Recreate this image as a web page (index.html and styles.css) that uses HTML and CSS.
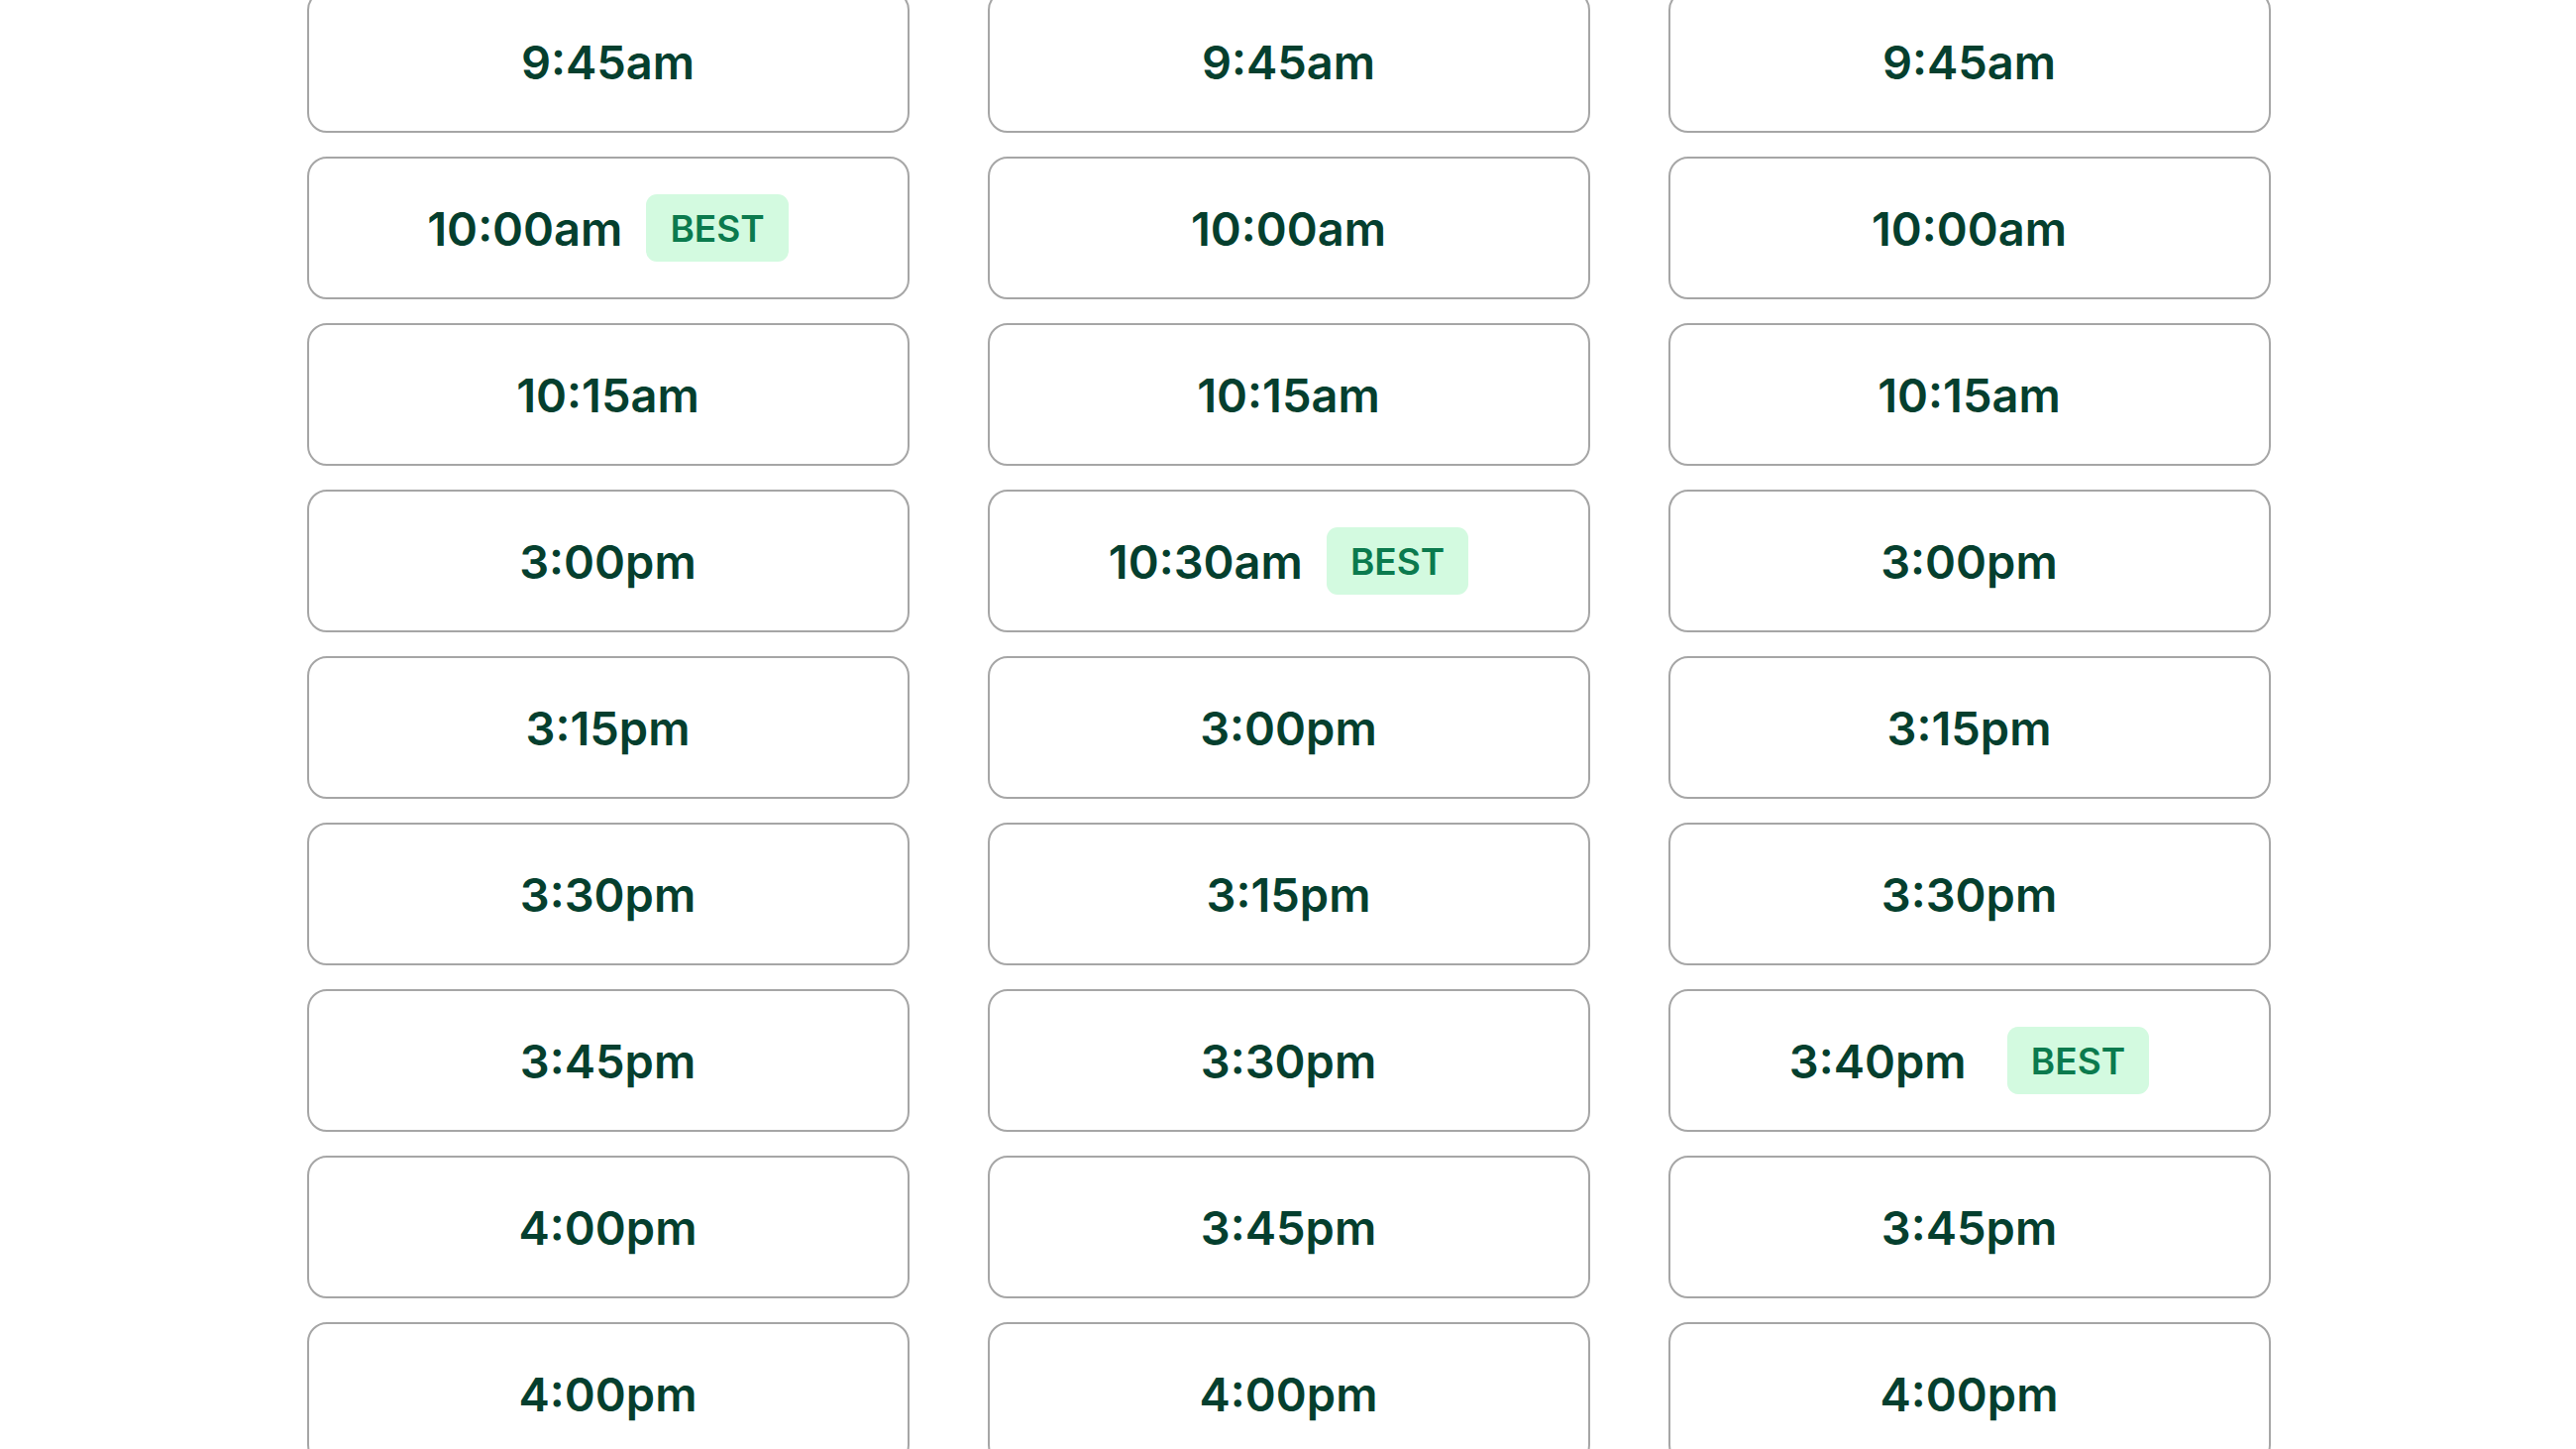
FILE: index.html
```html
<!DOCTYPE html>
<html lang="en">
<head>
<meta charset="utf-8">
<title>Time slots</title>
<link rel="stylesheet" href="styles.css">
</head>
<body>
<main class="schedule">
  <section class="day">
    <button class="slot"><span class="time">9:45am</span></button>
    <button class="slot slot-best"><span class="time">10:00am</span><span class="badge">BEST</span></button>
    <button class="slot"><span class="time">10:15am</span></button>
    <button class="slot"><span class="time">3:00pm</span></button>
    <button class="slot"><span class="time">3:15pm</span></button>
    <button class="slot"><span class="time">3:30pm</span></button>
    <button class="slot"><span class="time">3:45pm</span></button>
    <button class="slot"><span class="time">4:00pm</span></button>
    <button class="slot"><span class="time">4:00pm</span></button>
  </section>
  <section class="day">
    <button class="slot"><span class="time">9:45am</span></button>
    <button class="slot"><span class="time">10:00am</span></button>
    <button class="slot"><span class="time">10:15am</span></button>
    <button class="slot slot-best"><span class="time">10:30am</span><span class="badge">BEST</span></button>
    <button class="slot"><span class="time">3:00pm</span></button>
    <button class="slot"><span class="time">3:15pm</span></button>
    <button class="slot"><span class="time">3:30pm</span></button>
    <button class="slot"><span class="time">3:45pm</span></button>
    <button class="slot"><span class="time">4:00pm</span></button>
  </section>
  <section class="day">
    <button class="slot"><span class="time">9:45am</span></button>
    <button class="slot"><span class="time">10:00am</span></button>
    <button class="slot"><span class="time">10:15am</span></button>
    <button class="slot"><span class="time">3:00pm</span></button>
    <button class="slot"><span class="time">3:15pm</span></button>
    <button class="slot"><span class="time">3:30pm</span></button>
    <button class="slot slot-best"><span class="time">3:40pm</span><span class="badge">BEST</span></button>
    <button class="slot"><span class="time">3:45pm</span></button>
    <button class="slot"><span class="time">4:00pm</span></button>
  </section>
</main>
</body>
</html>
```

FILE: styles.css
```css
html, body {
  margin: 0;
  padding: 0;
  background: #ffffff;
  overflow: hidden;
}

body {
  font-family: Inter, "Noto Sans", "Liberation Sans", sans-serif;
  color: #053f2e;
}

.schedule {
  display: grid;
  grid-template-columns: repeat(3, 608px);
  column-gap: 79px;
  justify-content: center;
  margin-top: -10px;
  padding-left: 1px;
}

.day {
  display: flex;
  flex-direction: column;
  gap: 24px;
}

.slot {
  box-sizing: border-box;
  height: 144px;
  width: 100%;
  display: flex;
  align-items: center;
  justify-content: center;
  gap: 24px;
  background: #ffffff;
  border: 2px solid #a6a6a6;
  border-radius: 20px;
  padding: 0;
  font-family: inherit;
  color: inherit;
  cursor: pointer;
}

.time {
  font-size: 47px;
  font-weight: 600;
  letter-spacing: 0;
  line-height: 1;
}

.slot-best .time {
  min-width: 196px;
  text-align: left;
}

.badge {
  display: flex;
  align-items: center;
  justify-content: center;
  box-sizing: border-box;
  height: 68px;
  padding: 0 24px;
  border-radius: 11px;
  background: #d3fae0;
  color: #0b7a4e;
  font-size: 37px;
  font-weight: 600;
  line-height: 1;
}
```
